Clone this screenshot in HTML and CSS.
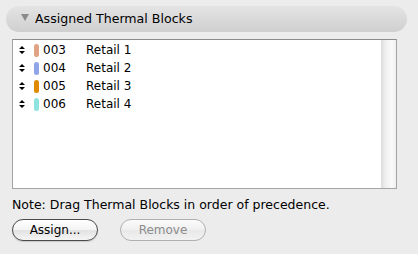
FILE: index.html
```html
<!DOCTYPE html>
<html>
<head>
<meta charset="utf-8">
<link rel="stylesheet" href="styles.css">
</head>
<body>
<div class="panel">
  <div class="header">
    <span class="disclosure"></span>
    <span class="title">Assigned Thermal Blocks</span>
  </div>
  <div class="listbox">
    <div class="rows">
      <div class="row">
        <svg class="grip" width="6" height="8" viewBox="0 0 6 8"><path d="M0 3 L3 0 L6 3 Z M0 5 L3 8 L6 5 Z" fill="#000"/></svg>
        <span class="swatch" style="background:#e0a386"></span>
        <span class="code">003</span>
        <span class="name">Retail 1</span>
      </div>
      <div class="row">
        <svg class="grip" width="6" height="8" viewBox="0 0 6 8"><path d="M0 3 L3 0 L6 3 Z M0 5 L3 8 L6 5 Z" fill="#000"/></svg>
        <span class="swatch" style="background:#8fa5e8"></span>
        <span class="code">004</span>
        <span class="name">Retail 2</span>
      </div>
      <div class="row">
        <svg class="grip" width="6" height="8" viewBox="0 0 6 8"><path d="M0 3 L3 0 L6 3 Z M0 5 L3 8 L6 5 Z" fill="#000"/></svg>
        <span class="swatch" style="background:#e08a00"></span>
        <span class="code">005</span>
        <span class="name">Retail 3</span>
      </div>
      <div class="row">
        <svg class="grip" width="6" height="8" viewBox="0 0 6 8"><path d="M0 3 L3 0 L6 3 Z M0 5 L3 8 L6 5 Z" fill="#000"/></svg>
        <span class="swatch" style="background:#8ee3e0"></span>
        <span class="code">006</span>
        <span class="name">Retail 4</span>
      </div>
    </div>
    <div class="scrolltrack"></div>
  </div>
  <div class="note">Note: Drag Thermal Blocks in order of precedence.</div>
  <div class="buttons">
    <button class="btn">Assign...</button>
    <button class="btn disabled">Remove</button>
  </div>
</div>
</body>
</html>
```
FILE: styles.css
```css
html, body {
  margin: 0;
  padding: 0;
  background: #ececec;
}
body {
  width: 418px;
  height: 254px;
  overflow: hidden;
  font-family: "DejaVu Sans", "Liberation Sans", sans-serif;
  font-size: 12px;
  color: #000;
}
.panel {
  padding: 6px 0 0 0;
}
.header {
  margin: 0 11px 0 6px;
  height: 26px;
  border-radius: 13px;
  background: linear-gradient(#e4e4e4, #cfcfcf);
  display: flex;
  align-items: center;
}
.disclosure {
  width: 0;
  height: 0;
  margin-left: 15px;
  margin-right: 6px;
  margin-top: -4px;
  border-left: 4px solid transparent;
  border-right: 4px solid transparent;
  border-top: 7px solid #8a8a8a;
}
.title {
  font-size: 12.6px;
  margin-top: -2px;
}
.listbox {
  margin: 7px 21px 0 12px;
  height: 148px;
  border: 1px solid #a4a4a4;
  border-top-color: #8c8c8c;
  background: #fff;
  display: flex;
}
.rows {
  flex: 1;
  padding-top: 1px;
}
.row {
  height: 18px;
  display: flex;
  align-items: center;
}
.grip {
  margin-left: 6px;
  margin-right: 9px;
}
.swatch {
  width: 5px;
  height: 13px;
  border-radius: 2.5px;
  margin-right: 4px;
}
.code {
  width: 43px;
}
.scrolltrack {
  width: 15px;
  background: linear-gradient(90deg, #dcdcdc, #efefef 30%, #fafafa 70%, #f0f0f0);
}
.note {
  margin: 8px 0 0 12px;
  height: 16px;
  line-height: 16px;
  font-size: 12.5px;
}
.buttons {
  margin: 6px 0 0 12px;
  display: flex;
  gap: 22px;
}
.btn {
  width: 86px;
  height: 22px;
  border-radius: 11px;
  border: 1px solid #4a4a4a;
  background: linear-gradient(#ffffff, #f3f3f3 50%, #e2e2e2 51%, #f5f5f5);
  font-family: "DejaVu Sans", "Liberation Sans", sans-serif;
  font-size: 12px;
  color: #000;
  padding: 0;
  box-shadow: 0 1px 1px rgba(0,0,0,0.15);
}
.btn.disabled {
  border-color: #b0b0b0;
  color: #8c8c8c;
  background: linear-gradient(#fbfbfb, #efefef 50%, #e8e8e8 51%, #f2f2f2);
  box-shadow: none;
}
```
